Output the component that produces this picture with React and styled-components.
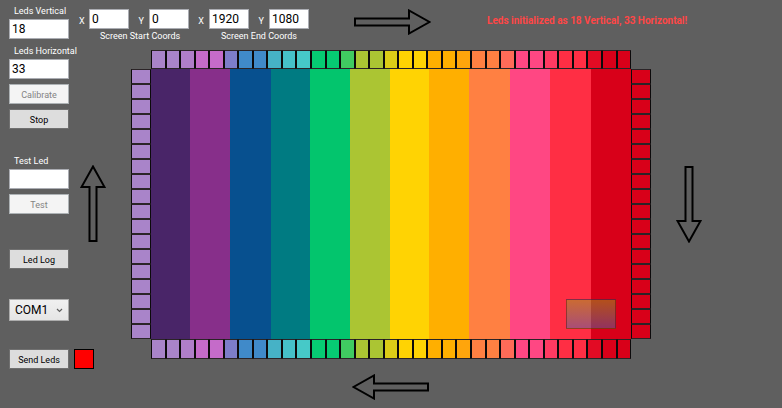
import React, { useId } from "react";
import styled, { createGlobalStyle } from "styled-components";

const GlobalStyle = createGlobalStyle`
  *, *::before, *::after { box-sizing: border-box; }
  body {
    margin: 0;
    background: #5f5f5f;
    color: #fff;
    font-family: Roboto, "Open Sans", sans-serif;
    font-size: 9px;
    line-height: 12px;
  }
  button, input, select { font-family: inherit; margin: 0; border-radius: 0; }
`;

const Page = styled.div`
  display: flex;
  min-height: 100vh;
  padding-left: 9px;
`;

const Sidebar = styled.aside`
  display: flex;
  flex-direction: column;
  flex: 0 0 70px;
  min-width: 0;
  padding-top: 5px;
`;

const Group = styled.div`
  display: flex;
  flex-direction: column;
  align-items: flex-start;
  gap: 6px;
  margin-bottom: ${(p) => p.$after || 0}px;
`;

const Field = styled.div`
  display: flex;
  flex-direction: column;
  gap: 2px;
`;

const Buttons = styled.div`
  display: flex;
  flex-direction: column;
  gap: 5px;
  margin-top: -1px;
`;

const FieldLabel = styled.label`
  padding-left: 5px;
  white-space: nowrap;
`;

const TextInput = styled.input`
  width: ${(p) => p.$width}px;
  height: 20px;
  padding: 0 2px;
  border: 1px solid #abadb3;
  background: #fff;
  color: #000;
  font-size: 12px;
  line-height: 16px;
`;

const Button = styled.button`
  flex-shrink: 0;
  width: 60px;
  height: 20px;
  padding: 1px 0 0;
  border: 1px solid #707070;
  background: #ddd;
  color: #000;
  font-size: 9px;
  line-height: 12px;
  &:disabled {
    border-color: #adb2b5;
    background: #f4f4f4;
    color: #838383;
  }
`;

const SelectBox = styled.div`
  display: grid;
  width: 60px;
  align-items: center;
  margin-bottom: 28px;
  > * { grid-area: 1 / 1; }
  > svg { justify-self: end; margin-right: 6px; pointer-events: none; }
`;

const Select = styled.select`
  width: 100%;
  height: 22px;
  padding: 0 5px;
  appearance: none;
  border: 1px solid #acacac;
  background: linear-gradient(#f0f0f0, #e5e5e5);
  color: #000;
  font-size: 12px;
  line-height: 18px;
`;

const SendRow = styled.div`
  display: flex;
  gap: 5px;
`;

const Swatch = styled.div`
  flex: 0 0 20px;
  height: 20px;
  border: 1px solid #000;
  background: #f00;
`;

const Workspace = styled.main`
  display: flex;
  flex: 1;
  flex-direction: column;
  min-width: 0;
`;

const TopBar = styled.header`
  display: flex;
  align-items: flex-start;
  height: 50px;
  padding-top: 9px;
`;

const CoordGroup = styled.fieldset`
  display: flex;
  flex-direction: column;
  gap: 1px;
  min-width: 0;
  margin: 0;
  padding: 0;
  border: 0;
`;

const CoordRow = styled.div`
  display: flex;
`;

const AxisLabel = styled.label`
  width: ${(p) => p.$width}px;
  padding: 6px 5px 0 0;
  text-align: right;
`;

const Caption = styled.div`
  padding-left: ${(p) => p.$indent}px;
  white-space: nowrap;
`;

const TopArrow = styled.div`
  margin-left: 45px;
  line-height: 0;
`;

const Status = styled.output`
  margin: 6px 0 0 56px;
  color: #ff4646;
  font-size: 10px;
  font-weight: 700;
  white-space: nowrap;
`;

const Middle = styled.div`
  display: flex;
  align-items: center;
`;

const Gutter = styled.div`
  display: flex;
  flex: 0 0 ${(p) => p.$width}px;
  padding-left: ${(p) => p.$indent}px;
  padding-bottom: ${(p) => p.$lift || 0}px;
`;

const Stage = styled.section`
  display: grid;
  flex: 1;
  grid-template: 19px 270px 20px / 20px 1fr 20px;
  grid-template-areas: ". top ." "left screen right" ". bottom .";
  min-width: 0;
`;

const LedStrip = styled.div`
  display: flex;
  grid-area: ${(p) => p.$side};
  flex-direction: ${(p) => (p.$side === "left" || p.$side === "right" ? "column" : "row")};
`;

const Led = styled.div`
  flex: 1;
  border: 1px solid;
  border-color: #2b2427 #0c0a0b;
  background: ${(p) => p.$color};
`;

const Screen = styled.div`
  position: relative;
  display: flex;
  grid-area: screen;
`;

const Stripe = styled.div`
  flex: ${(p) => p.$grow} 0 0;
  background: ${(p) => p.$color};
`;

const Sample = styled.div`
  position: absolute;
  right: 15px;
  bottom: 10px;
  width: 50px;
  height: 30px;
  border: 1px solid rgba(70, 0, 0, 0.4);
  background: linear-gradient(rgba(130, 190, 30, 0.42), rgba(50, 120, 190, 0.42));
`;

const Footer = styled.footer`
  display: flex;
  justify-content: center;
  padding: 15px 81px 0 0;
`;

const STRIPES = [
  ["#492568", 39],
  ["#872f8a", 40],
  ["#07508f", 41],
  ["#007b82", 39],
  ["#03c56d", 40],
  ["#abc533", 40],
  ["#ffd303", 39],
  ["#ffaf00", 40],
  ["#ff8042", 41],
  ["#ff4783", 40],
  ["#ff2e44", 41],
  ["#d80019", 40],
];

const ROW_LEDS = [
  "#a984c9", "#a984c9", "#b07ec9", "#c56bc9", "#c56bc9", "#7d7dc9", "#408ac9",
  "#408ac9", "#46b2c6", "#46c1c9", "#46c9c8", "#06cb73", "#06cb73", "#40cb61",
  "#abc533", "#abc533", "#dccc17", "#ffd303", "#ffd303", "#ffaf00", "#ffaf00",
  "#ffa50c", "#ff8042", "#ff8042", "#ff6b58", "#ff4783", "#ff4783", "#ff3a62",
  "#ff2e44", "#ff2e44", "#e20b24", "#d80019", "#d80019",
];

const SIDE_COUNT = 18;

const ARROWS = {
  right: [77, 26, "M1 9.5H55V1.5L75.5 13L55 24.5V16.5H1Z"],
  left: [77, 26, "M76 9.5H22V1.5L1.5 13L22 24.5V16.5H76Z"],
  up: [26, 77, "M9.5 76V22H1.5L13 1.5L24.5 22H16.5V76Z"],
  down: [26, 77, "M9.5 1V55H1.5L13 75.5L24.5 55H16.5V1Z"],
};

function Arrow({ direction }) {
  const [width, height, d] = ARROWS[direction];
  return (
    <svg width={width} height={height} viewBox={`0 0 ${width} ${height}`} aria-hidden="true">
      <path d={d} fill="none" stroke="#000" strokeWidth="2" />
    </svg>
  );
}

function NumberField({ label, value }) {
  const id = useId();
  return (
    <Field>
      <FieldLabel htmlFor={id}>{label}</FieldLabel>
      <TextInput id={id} $width={60} defaultValue={value} />
    </Field>
  );
}

function Coord({ axis, value, labelWidth }) {
  const id = useId();
  return (
    <>
      <AxisLabel htmlFor={id} $width={labelWidth}>{axis}</AxisLabel>
      <TextInput id={id} $width={40} defaultValue={value} />
    </>
  );
}

function Strip({ side, colors }) {
  return (
    <LedStrip $side={side}>
      {colors.map((color, i) => <Led key={i} $color={color} />)}
    </LedStrip>
  );
}

export default function App() {
  return (
    <>
      <GlobalStyle />
      <Page>
        <Sidebar>
          <Group $after={26}>
            <NumberField label="Leds Vertical" value="18" />
            <NumberField label="Leds Horizontal" value="33" />
            <Buttons>
              <Button disabled>Calibrate</Button>
              <Button>Stop</Button>
            </Buttons>
          </Group>
          <Group $after={35}>
            <NumberField label="Test Led" value="" />
            <Buttons>
              <Button disabled>Test</Button>
            </Buttons>
          </Group>
          <Group $after={30}>
            <Button>Led Log</Button>
          </Group>
          <SelectBox>
            <Select aria-label="Serial port" defaultValue="COM1">
              <option>COM1</option>
            </Select>
            <svg width="7" height="5" viewBox="0 0 7 5" aria-hidden="true">
              <path d="M1 1L3.5 3.5L6 1" fill="none" stroke="#606060" strokeWidth="1.2" />
            </svg>
          </SelectBox>
          <SendRow>
            <Button>Send Leds</Button>
            <Swatch />
          </SendRow>
        </Sidebar>
        <Workspace>
          <TopBar>
            <CoordGroup aria-label="Screen Start Coords">
              <CoordRow>
                <Coord axis="X" value="0" labelWidth={10} />
                <Coord axis="Y" value="0" labelWidth={20} />
              </CoordRow>
              <Caption $indent={21}>Screen Start Coords</Caption>
            </CoordGroup>
            <CoordGroup aria-label="Screen End Coords">
              <CoordRow>
                <Coord axis="X" value="1920" labelWidth={20} />
                <Coord axis="Y" value="1080" labelWidth={20} />
              </CoordRow>
              <Caption $indent={32}>Screen End Coords</Caption>
            </CoordGroup>
            <TopArrow><Arrow direction="right" /></TopArrow>
            <Status>Leds initialized as 18 Vertical, 33 Horizontal!</Status>
          </TopBar>
          <Middle>
            <Gutter $width={52} $indent={1} $lift={3}><Arrow direction="up" /></Gutter>
            <Stage>
              <Strip side="top" colors={ROW_LEDS} />
              <Strip side="left" colors={Array(SIDE_COUNT).fill("#a984c9")} />
              <Screen>
                {STRIPES.map(([color, grow]) => <Stripe key={color} $color={color} $grow={grow} />)}
                <Sample />
              </Screen>
              <Strip side="right" colors={Array(SIDE_COUNT).fill("#d80019")} />
              <Strip side="bottom" colors={ROW_LEDS} />
            </Stage>
            <Gutter $width={131} $indent={25}><Arrow direction="down" /></Gutter>
          </Middle>
          <Footer><Arrow direction="left" /></Footer>
        </Workspace>
      </Page>
    </>
  );
}
